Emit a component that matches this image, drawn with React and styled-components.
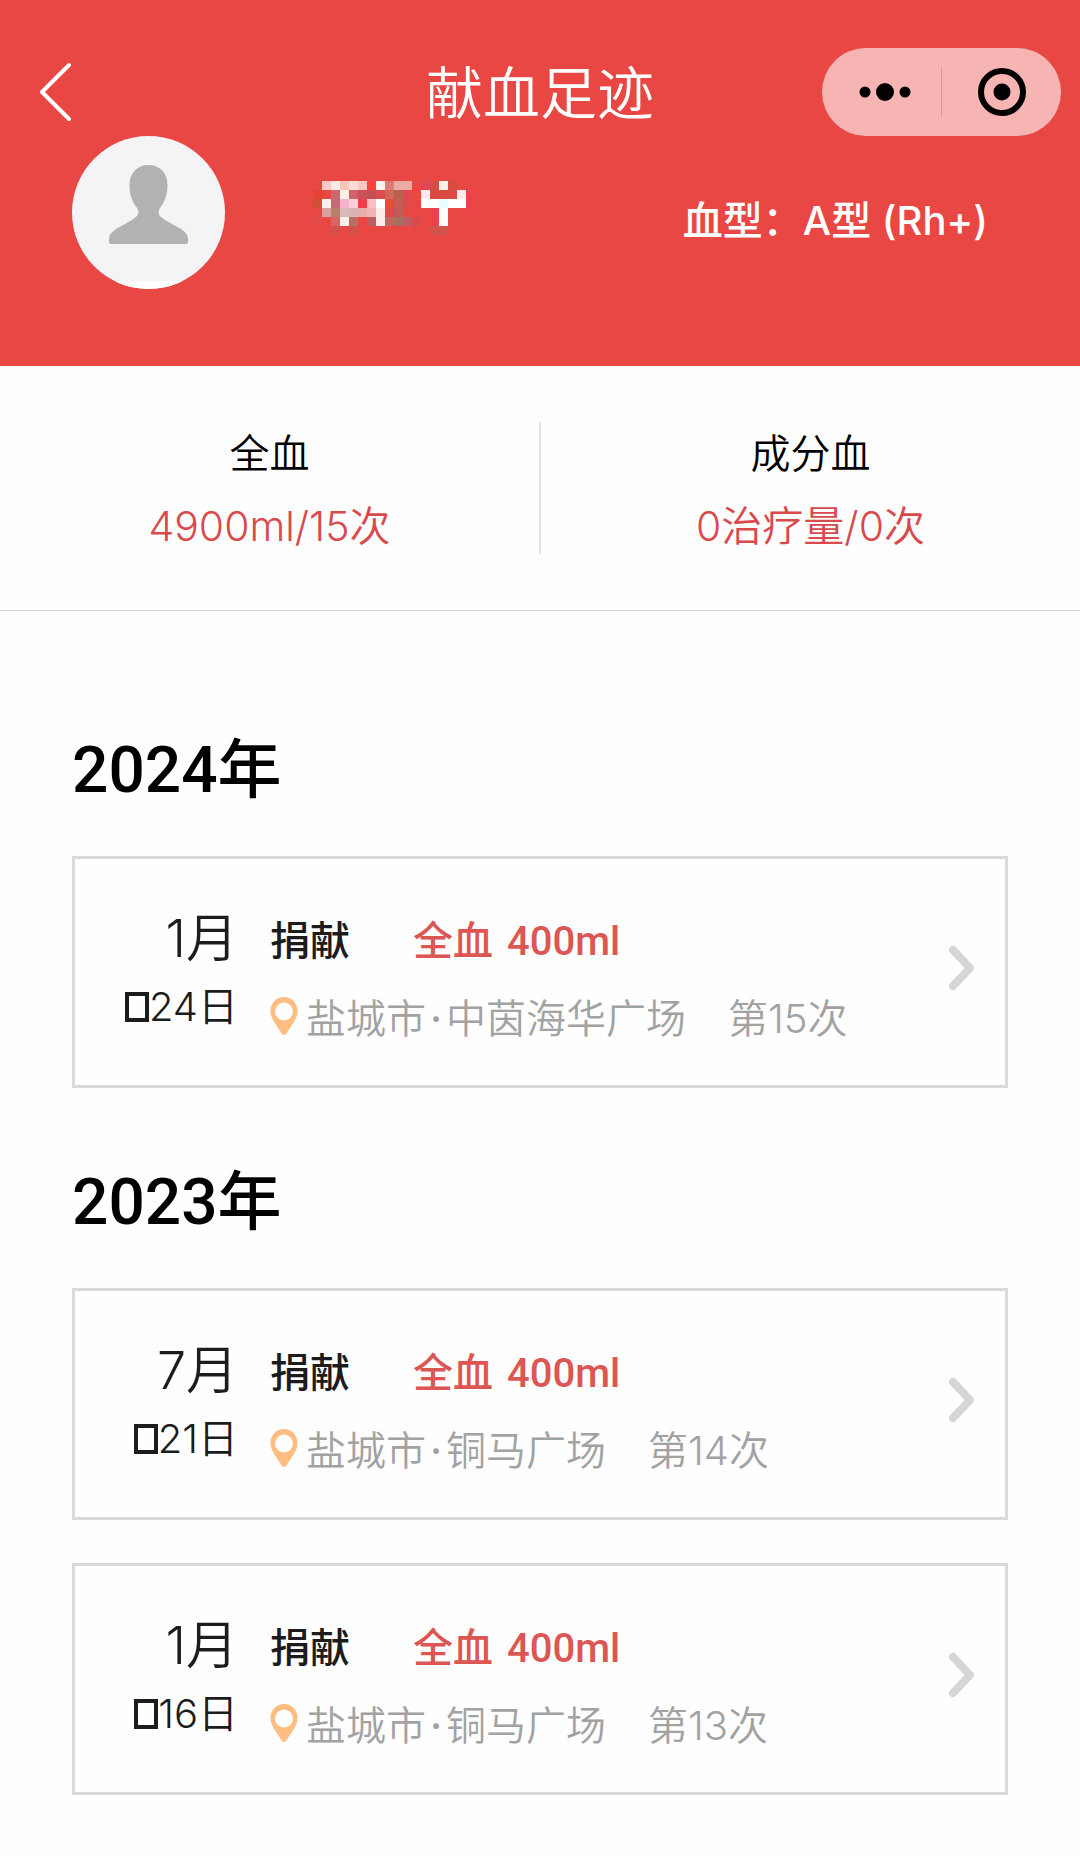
import React from "react";
import styled, { createGlobalStyle } from "styled-components";

const GlobalStyle = createGlobalStyle`
  *, *::before, *::after { box-sizing: border-box; }
  body {
    margin: 0;
    background: #fefefe;
    color: #1c1c1c;
    font-family: Inter, "Noto Sans CJK SC", sans-serif;
    font-size: 40px;
    line-height: 56px;
    font-weight: 350;
  }
  h1, h2, p, dl, dt, dd, ul { margin: 0; padding: 0; }
  button { border: 0; padding: 0; background: none; color: inherit; font: inherit; cursor: pointer; }
`;

const Header = styled.header`
  background: #e94744;
  color: #fff;
  padding-bottom: 77px;
`;

const NavBar = styled.nav`
  display: grid;
  grid-template-columns: 1fr auto 1fr;
  align-items: center;
  padding: 48px 19px 0;
`;

const BackButton = styled.button`
  display: flex;
  justify-self: start;
  padding-left: 19px;
`;

const Title = styled.h1`
  padding-top: 4px;
  font-size: 57px;
  line-height: 72px;
  font-weight: 350;
`;

const Capsule = styled.div`
  justify-self: end;
  display: grid;
  grid-template-columns: 113px 1px 1fr;
  align-items: center;
  width: 239px;
  height: 88px;
  padding-left: 6px;
  border-radius: 44px;
  background: #f6b4b3;
  color: #000;
`;

const CapsuleButton = styled.button`
  display: flex;
  justify-content: center;
`;

const CapsuleDivider = styled.span`
  height: 52px;
  background: #dd9c9b;
`;

const Profile = styled.div`
  display: flex;
  align-items: flex-start;
  padding: 0 92px 0 72px;
`;

const MaskedName = styled.svg`
  margin: 36px auto 0 87px;
`;

const BloodType = styled.p`
  margin-top: 57px;
  font-weight: 500;
`;

const Totals = styled.dl`
  display: flex;
  padding: 56px 0;
  border-bottom: 1px solid #d4d4d4;
`;

const Total = styled.div`
  flex: 1;
  display: flex;
  flex-direction: column;
  gap: 16px;
  height: 132px;
  padding-top: 4px;
  text-align: center;

  &:first-child { border-right: 2px solid #e4e4e4; }
`;

const TotalLabel = styled.dt`
  color: #000;
`;

const TotalValue = styled.dd`
  color: #d84a4c;
  font-size: 41px;
`;

const History = styled.main`
  display: flex;
  flex-direction: column;
  gap: 79px;
  padding: 124px 72px 60px;
`;

const YearTitle = styled.h2`
  margin-bottom: 49px;
  color: #000;
  font-family: Roboto, "Noto Sans CJK SC", sans-serif;
  font-size: 64px;
  line-height: 72px;
  font-weight: 500;
`;

const Records = styled.ul`
  display: flex;
  flex-direction: column;
  gap: 43px;
  list-style: none;
`;

const RecordLink = styled.a`
  display: flex;
  align-items: flex-start;
  height: 232px;
  padding: 52px 30px 0 0;
  border: 3px solid #d9d9d9;
  color: inherit;
  text-decoration: none;
`;

const DateColumn = styled.div`
  display: flex;
  flex-direction: column;
  gap: 12px;
  width: 163px;
  text-align: right;
`;

const Month = styled.span`
  font-size: 52px;
`;

const Day = styled.span`
  display: flex;
  align-items: center;
  justify-content: flex-end;
`;

const MissingGlyph = styled.span`
  width: 24px;
  height: 30px;
  border: 4px solid #1c1c1c;
`;

const Details = styled.div`
  flex: 1;
  display: flex;
  flex-direction: column;
  gap: 21px;
  padding: 3px 0 0 32px;
`;

const Donation = styled.p`
  display: flex;
  gap: 63px;
  font-family: Roboto, "Noto Sans CJK SC", sans-serif;
  font-weight: 500;
`;

const Amount = styled.span`
  display: flex;
  gap: 14px;
  color: #dc5654;
`;

const Place = styled.p`
  display: flex;
  align-items: center;
  color: #a2a2a2;
`;

const PinIcon = styled.svg`
  margin: 0 8px 6px 0;
`;

const PlaceDot = styled.span`
  width: 20px;
  text-align: center;
  font-weight: 500;
`;

const Count = styled.span`
  margin-left: 42px;
`;

const ChevronIcon = styled.svg`
  margin-top: 34px;
`;

/* one row per mosaic line: [column, colour] */
const MOSAIC = [
  [[1, "#fac8c6"], [2, "#fde8e8"], [3, "#f7c8b8"], [4, "#f9dcd6"], [5, "#fcc8c4"], [6, "#ff4038"], [7, "#fff0ec"], [8, "#dd7a72"], [9, "#ebaaa2"], [10, "#ebaaa2"], [12, "#e04858"], [13, "#d84c42"], [14, "#fdf0e8"], [15, "#d84c42"]],
  [[0, "#e2442f"], [2, "#c86a70"], [3, "#fdeee6"], [4, "#d4606a"], [5, "#cc5058"], [6, "#c45056"], [7, "#dd4c4c"], [8, "#d06a58"], [9, "#b86050"], [10, "#e04850"], [12, "#fdecea"], [13, "#d84a42"], [14, "#d84a42"], [15, "#d84a42"], [16, "#fdecea"], [17, "#ee424a"]],
  [[0, "#d05038"], [1, "#ffeeec"], [2, "#c46a70"], [3, "#f6b4cc"], [4, "#fcd0d8"], [5, "#ee4048"], [6, "#fac0be"], [7, "#ffffff"], [8, "#ea4a3a"], [9, "#c45c58"], [10, "#e04a4c"], [12, "#ffffff"], [13, "#ffffff"], [14, "#eafeff"], [15, "#ffffff"], [16, "#ffffff"], [17, "#ec424a"]],
  [[1, "#dca0a0"], [2, "#b4806c"], [3, "#d8b8bc"], [4, "#dab4b4"], [5, "#e8acaa"], [6, "#f4b4b6"], [7, "#feeaea"], [8, "#e44848"], [9, "#bf5c5a"], [13, "#ec4250"], [14, "#ffffff"], [17, "#ec4448"]],
  [[0, "#e44c4c"], [2, "#d86464"], [3, "#ffeeea"], [4, "#b86c66"], [6, "#bc5e5c"], [7, "#feeae8"], [8, "#bc6860"], [9, "#a4705c"], [10, "#c45866"], [11, "#d84a4c"], [13, "#ee4048"], [14, "#fffcf6"]],
  [[2, "#d05248"], [4, "#d05248"], [13, "#d0544c"], [14, "#d0544c"]],
];

const HISTORY = [
  { year: "2024年", records: [{ month: "1月", day: "24日", city: "盐城市", venue: "中茵海华广场", count: "第15次" }] },
  {
    year: "2023年",
    records: [
      { month: "7月", day: "21日", city: "盐城市", venue: "铜马广场", count: "第14次" },
      { month: "1月", day: "16日", city: "盐城市", venue: "铜马广场", count: "第13次" },
    ],
  },
];

function Avatar() {
  return (
    <svg width="153" height="153" viewBox="0 0 153 153" role="img" aria-label="头像">
      <clipPath id="avatar-circle"><circle cx="76.5" cy="76.5" r="76.5" /></clipPath>
      <g clipPath="url(#avatar-circle)">
        <rect width="153" height="153" fill="#f4f4f6" />
        <rect y="145" width="153" height="8" fill="#fff" />
        <path
          fill="#b2b2b3"
          d="M76.5 29C65 29 57.5 37 57.5 49c0 10 3 17 6.500 21.500 3 4.500 3 7.500.5 10C58 86 48 90 42 94.500c-3.500 3-5 5-5 8.500v3q0 2 2 2h75q2 0 2-2v-3c0-3.500-1.500-5.500-5-8.500-6-4.500-16-8.500-22.500-14-2.500-2.500-2.500-5.500.5-10C92.500 66 95.500 59 95.500 49c0-12-7.500-20-19-20z"
        />
      </g>
    </svg>
  );
}

function Record({ month, day, city, venue, count }) {
  return (
    <li>
      <RecordLink href="#record">
        <DateColumn>
          <Month>{month}</Month>
          <Day><MissingGlyph aria-hidden="true" />{day}</Day>
        </DateColumn>
        <Details>
          <Donation>
            <span>捐献</span>
            <Amount><span>全血</span><span>400ml</span></Amount>
          </Donation>
          <Place>
            <PinIcon width="28" height="40" viewBox="0 0 28 40" aria-hidden="true">
              <path
                fill="#ffbd82"
                fillRule="evenodd"
                d="M14 1C6.500 1 .5 7 .5 15c0 5 2.500 9.500 5.500 14l6 9q2 2 4 0l6-9c3-4.500 5.500-9 5.500-14C27.500 7 21.500 1 14 1zM14 6.500a9 9 0 1 0 0 18a9 9 0 1 0 0-18z"
              />
            </PinIcon>
            <span>{city}</span>
            <PlaceDot>·</PlaceDot>
            <span>{venue}</span>
            <Count>{count}</Count>
          </Place>
        </Details>
        <ChevronIcon width="27" height="46" viewBox="0 0 27 46" fill="none" aria-hidden="true">
          <path d="M5 5l17 18L5 41" stroke="#d6d6d6" strokeWidth="8" strokeLinecap="round" strokeLinejoin="round" />
        </ChevronIcon>
      </RecordLink>
    </li>
  );
}

export default function App() {
  return (
    <>
      <GlobalStyle />
      <Header>
        <NavBar>
          <BackButton type="button" aria-label="返回">
            <svg width="34" height="60" viewBox="0 0 34 60" fill="none" aria-hidden="true">
              <path d="M31 3L4 30l27 27" stroke="#fff" strokeWidth="4" strokeLinecap="round" strokeLinejoin="round" />
            </svg>
          </BackButton>
          <Title>献血足迹</Title>
          <Capsule>
            <CapsuleButton type="button" aria-label="更多">
              <svg width="54" height="20" viewBox="0 0 54 20" aria-hidden="true">
                <circle cx="7" cy="10" r="5.500" />
                <circle cx="27" cy="10" r="9" />
                <circle cx="47" cy="10" r="5.500" />
              </svg>
            </CapsuleButton>
            <CapsuleDivider />
            <CapsuleButton type="button" aria-label="关闭">
              <svg width="48" height="48" viewBox="0 0 48 48" aria-hidden="true">
                <circle cx="24" cy="24" r="21" fill="none" stroke="#000" strokeWidth="6" />
                <circle cx="24" cy="24" r="8.500" />
              </svg>
            </CapsuleButton>
          </Capsule>
        </NavBar>
        <Profile>
          <Avatar />
          <MaskedName width="164" height="72" viewBox="0 0 18 8" shapeRendering="crispEdges" role="img" aria-label="姓名已隐藏">
            {MOSAIC.map((cells, row) =>
              cells.map(([column, colour]) => (
                <rect key={`${row}-${column}`} x={column} y={row + 1} width="1" height="1" fill={colour} />
              ))
            )}
          </MaskedName>
          <BloodType>血型：A型 (Rh+)</BloodType>
        </Profile>
      </Header>
      <Totals>
        <Total>
          <TotalLabel>全血</TotalLabel>
          <TotalValue>4900ml/15次</TotalValue>
        </Total>
        <Total>
          <TotalLabel>成分血</TotalLabel>
          <TotalValue>0治疗量/0次</TotalValue>
        </Total>
      </Totals>
      <History>
        {HISTORY.map(({ year, records }) => (
          <section key={year}>
            <YearTitle>{year}</YearTitle>
            <Records>
              {records.map((record) => <Record key={record.month} {...record} />)}
            </Records>
          </section>
        ))}
      </History>
    </>
  );
}
